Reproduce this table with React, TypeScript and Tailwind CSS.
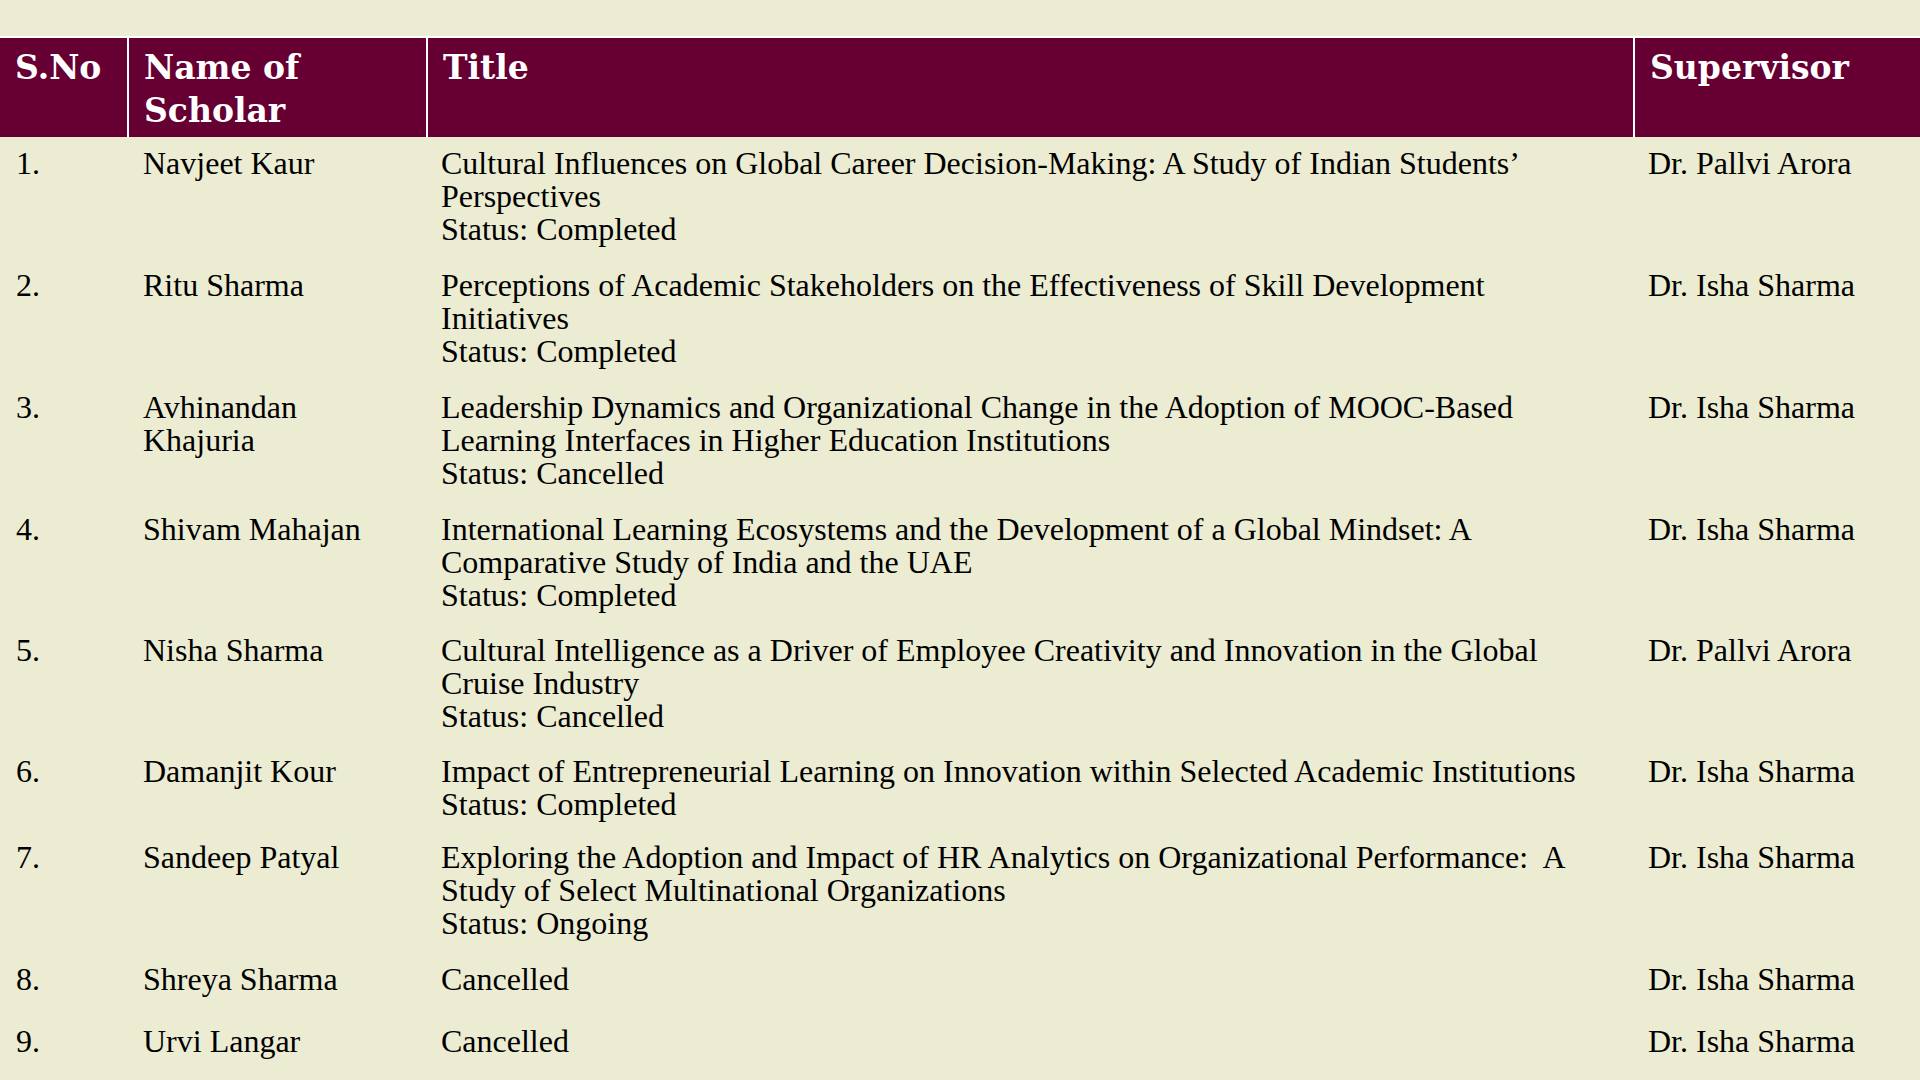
const rows = [
  {
    no: "1.",
    name: ["Navjeet Kaur"],
    title: [
      "Cultural Influences on Global Career Decision-Making: A Study of Indian Students’",
      "Perspectives",
      "Status: Completed",
    ],
    sup: "Dr. Pallvi Arora",
    h: "h-[122px]",
  },
  {
    no: "2.",
    name: ["Ritu Sharma"],
    title: [
      "Perceptions of Academic Stakeholders on the Effectiveness of Skill Development",
      "Initiatives",
      "Status: Completed",
    ],
    sup: "Dr. Isha Sharma",
    h: "h-[122px]",
  },
  {
    no: "3.",
    name: ["Avhinandan", "Khajuria"],
    title: [
      "Leadership Dynamics and Organizational Change in the Adoption of MOOC-Based",
      "Learning Interfaces in Higher Education Institutions",
      "Status: Cancelled",
    ],
    sup: "Dr. Isha Sharma",
    h: "h-[122px]",
  },
  {
    no: "4.",
    name: ["Shivam Mahajan"],
    title: [
      "International Learning Ecosystems and the Development of a Global Mindset: A",
      "Comparative Study of India and the UAE",
      "Status: Completed",
    ],
    sup: "Dr. Isha Sharma",
    h: "h-[121px]",
  },
  {
    no: "5.",
    name: ["Nisha Sharma"],
    title: [
      "Cultural Intelligence as a Driver of Employee Creativity and Innovation in the Global",
      "Cruise Industry",
      "Status: Cancelled",
    ],
    sup: "Dr. Pallvi Arora",
    h: "h-[121px]",
  },
  {
    no: "6.",
    name: ["Damanjit Kour"],
    title: [
      "Impact of Entrepreneurial Learning on Innovation within Selected Academic Institutions",
      "Status: Completed",
    ],
    sup: "Dr. Isha Sharma",
    h: "h-[86px]",
  },
  {
    no: "7.",
    name: ["Sandeep Patyal"],
    title: [
      "Exploring the Adoption and Impact of HR Analytics on Organizational Performance:  A",
      "Study of Select Multinational Organizations",
      "Status: Ongoing",
    ],
    sup: "Dr. Isha Sharma",
    h: "h-[122px]",
  },
  {
    no: "8.",
    name: ["Shreya Sharma"],
    title: ["Cancelled"],
    sup: "Dr. Isha Sharma",
    h: "h-[62px]",
  },
  {
    no: "9.",
    name: ["Urvi Langar"],
    title: ["Cancelled"],
    sup: "Dr. Isha Sharma",
    h: "h-[65px]",
  },
];

const cols = "grid grid-cols-[127px_299px_1207px_287px]";

export default function App() {
  return (
    <div className="w-[1920px] h-[1080px] overflow-hidden bg-[#ececd3] pt-[36px] font-['Liberation_Serif',serif] text-black">

      <div className={`${cols} h-[101px] bg-[#660033] border-t-2 border-white text-white font-['DejaVu_Serif',serif] font-bold text-[33px] leading-[43px]`}>
        <div className="pl-[15px] pt-[8px]">S.No</div>
        <div className="pl-[15px] pr-[10px] pt-[8px] border-l-2 border-white">Name of Scholar</div>
        <div className="pl-[15px] pt-[8px] border-l-2 border-white">Title</div>
        <div className="pl-[15px] pt-[8px] border-l-2 border-white">Supervisor</div>
      </div>

      {rows.map((r) => (
        <div key={r.no} className={`${cols} ${r.h} text-[32px] leading-[33px]`}>
          <div className="pl-[16px] pt-[10px]">{r.no}</div>
          <div className="pl-[16px] pt-[10px]">
            {r.name.map((n) => (
              <div key={n}>{n}</div>
            ))}
          </div>
          <div className="pl-[15px] pt-[10px] whitespace-pre">
            {r.title.map((t) => (
              <div key={t}>{t}</div>
            ))}
          </div>
          <div className="pl-[15px] pt-[10px] whitespace-nowrap">{r.sup}</div>
        </div>
      ))}

    </div>
  );
}
